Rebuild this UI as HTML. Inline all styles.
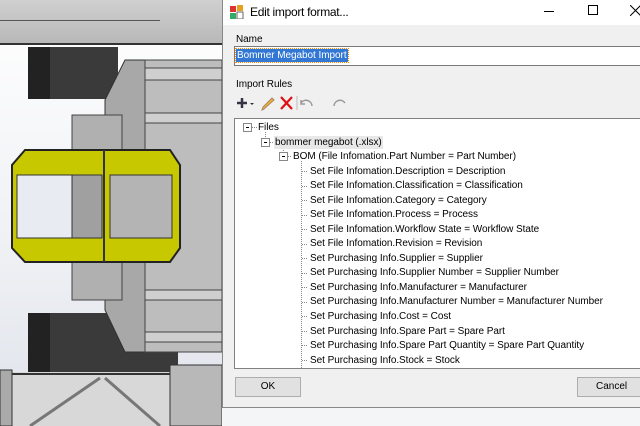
<!DOCTYPE html>
<html><head><meta charset="utf-8"><style>
*{margin:0;padding:0;box-sizing:border-box}
body{width:640px;height:426px;overflow:hidden;position:relative;background:#f4f5f7;font-family:"Liberation Sans",sans-serif;font-size:10px;color:#000}
.a{position:absolute}
.t{position:absolute;white-space:nowrap;font-size:10px;line-height:13px;letter-spacing:-0.05px}
</style></head><body>
<div class="a" style="left:0;top:0;width:222px;height:426px;background:linear-gradient(#fff,#eef0f4 60%,#dfe3ea)"></div>
<div class="a" style="left:0;top:0;width:222px;height:45px;background:linear-gradient(#d0d0d0,#b8b8b8);border-bottom:2px solid #333"></div>
<div class="a" style="left:0;top:20px;width:160px;height:1px;background:#555"></div>
<div class="a" style="left:28px;top:47px;width:90px;height:52px;background:#3a3a3a"></div>
<div class="a" style="left:28px;top:47px;width:22px;height:52px;background:#222"></div>
<div class="a" style="left:28px;top:313px;width:150px;height:60px;background:#3a3a3a"></div>
<div class="a" style="left:28px;top:313px;width:22px;height:60px;background:#222"></div>
<svg class="a" style="left:0;top:0" width="222" height="426">
<polygon points="125,60 222,60 222,352 125,352 105,310 105,100" fill="#a8a8a8" stroke="#333"/>
<rect x="145" y="60" width="77" height="292" fill="#bdbdbd" stroke="#444"/>
<rect x="145" y="68" width="77" height="12" fill="#cfcfcf" stroke="#444"/>
<rect x="145" y="113" width="77" height="10" fill="#cfcfcf" stroke="#444"/>
<rect x="145" y="290" width="77" height="10" fill="#cfcfcf" stroke="#444"/>
<rect x="145" y="332" width="77" height="10" fill="#cfcfcf" stroke="#444"/>
<rect x="72" y="115" width="50" height="185" fill="#b0b0b0" stroke="#444"/>
<polygon points="25,150 170,150 180,165 180,248 170,262 25,262 12,248 12,165" fill="#c8c800" stroke="#222" stroke-width="2"/>
<rect x="17" y="175" width="55" height="63" fill="#e8ecf2" stroke="#333"/>
<rect x="72" y="175" width="30" height="63" fill="#a0a0a0" stroke="#333"/>
<rect x="110" y="175" width="62" height="63" fill="#b4b4b4" stroke="#333"/>
<line x1="104" y1="150" x2="104" y2="262" stroke="#333" stroke-width="2"/>
<rect x="0" y="372" width="222" height="54" fill="#d8d8d8"/>
<line x1="0" y1="374" x2="222" y2="374" stroke="#333" stroke-width="2"/>
<line x1="30" y1="426" x2="100" y2="378" stroke="#777" stroke-width="3"/>
<line x1="105" y1="378" x2="160" y2="426" stroke="#777" stroke-width="3"/>
<rect x="0" y="370" width="12" height="56" fill="#aaa" stroke="#333"/>
<rect x="170" y="365" width="52" height="61" fill="#b8b8b8" stroke="#333"/>
</svg>
<div class="a" style="left:222px;top:0;width:418px;height:408px;background:#f0f0f0;border-left:1px solid #888;border-bottom:1px solid #888"></div>
<div class="a" style="left:223px;top:0;width:417px;height:25px;background:#fff"></div>
<svg class="a" style="left:230px;top:5px" width="14" height="14"><rect x="0" y="1" width="6" height="6" fill="#d33"/><rect x="7" y="0" width="6" height="6" fill="#e8a020"/><rect x="0" y="8" width="6" height="6" fill="#3a6"/><rect x="7" y="7" width="6" height="7" fill="#fff" stroke="#666"/></svg>
<div class="t" style="left:250px;top:5px;font-size:12px;line-height:15px;letter-spacing:-0.3px">Edit import format...</div>
<div class="a" style="left:544px;top:11px;width:10px;height:1px;background:#000"></div>
<div class="a" style="left:588px;top:5px;width:10px;height:10px;border:1px solid #000"></div>
<svg class="a" style="left:630px;top:5px" width="10" height="11"><path d="M0 0L11 11M11 0L0 11" stroke="#000"/></svg>
<div class="t" style="left:236px;top:33px">Name</div>
<div class="a" style="left:234px;top:46px;width:406px;height:20px;background:#fff;border:1px solid #7a7a7a;border-right:none"></div>
<div class="t" style="left:236px;top:49px;background:#3377d4;color:#fff;padding:0 1px;outline:1px dotted #f80">Bommer Megabot Import</div>
<div class="t" style="left:236px;top:78px">Import Rules</div>
<svg class="a" style="left:236px;top:95px" width="120" height="16">
<path d="M1 8H11M6 3V13" stroke="#334" stroke-width="2.5"/><path d="M14 8L18 8L16 10Z" fill="#333"/>
<path d="M28 14L26 15L27 12L36 3L38 5Z" fill="#f0b030" stroke="#a86"/>
<path d="M45 2L56 14M56 2L45 14" stroke="#e01010" stroke-width="2.2"/>
<line x1="61" y1="1" x2="61" y2="15" stroke="#bbb"/>
<path d="M76 11A6 6 0 0 0 65 8M65 5V9H69" stroke="#999" fill="none" stroke-width="1.5"/>
<path d="M98 11A6 6 0 0 1 109 8" stroke="#999" fill="none" stroke-width="1.5"/>
</svg>
<div class="a" style="left:234px;top:118px;width:406px;height:251px;background:#fff;border:1px solid #828282;border-right:none"></div>
<svg class="a" style="left:234px;top:118px" width="120" height="251" stroke="#888" fill="none">
<rect x="9.5" y="5.5" width="8" height="8" fill="#fff"/><path d="M12 9.5h3" stroke="#000"/><path d="M18 9.5h5" stroke-dasharray="1 1"/>
<rect x="27.5" y="20.5" width="8" height="8" fill="#fff"/><path d="M30 24.5h3" stroke="#000"/><path d="M36 24.5h4" stroke-dasharray="1 1"/>
<rect x="45.5" y="34.5" width="8" height="8" fill="#fff"/><path d="M48 38.5h3" stroke="#000"/><path d="M54 38.5h4" stroke-dasharray="1 1"/>
<path d="M31.5 14v6M49.5 28v6M67.5 43v208" stroke-dasharray="1 1"/>
<g stroke-dasharray="1 1">
<path d="M68 53.5h6M68 68.5h6M68 82.5h6M68 97.5h6M68 111.5h6M68 126.5h6M68 140.5h6M68 155.5h6M68 169.5h6M68 184.5h6M68 198.5h6M68 213.5h6M68 227.5h6M68 242.5h6"/></g>
</svg>
<div class="t" style="left:258px;top:121px">Files</div>
<div class="t" style="left:274px;top:136px;background:#e8e8e8;padding:0 1px">bommer megabot (.xlsx)</div>
<div class="t" style="left:293px;top:150px">BOM (File Infomation.Part Number = Part Number)</div>
<div class="t" style="left:310px;top:165px">Set File Infomation.Description = Description</div>
<div class="t" style="left:310px;top:179px">Set File Infomation.Classification = Classification</div>
<div class="t" style="left:310px;top:194px">Set File Infomation.Category = Category</div>
<div class="t" style="left:310px;top:208px">Set File Infomation.Process = Process</div>
<div class="t" style="left:310px;top:223px">Set File Infomation.Workflow State = Workflow State</div>
<div class="t" style="left:310px;top:237px">Set File Infomation.Revision = Revision</div>
<div class="t" style="left:310px;top:252px">Set Purchasing Info.Supplier = Supplier</div>
<div class="t" style="left:310px;top:266px">Set Purchasing Info.Supplier Number = Supplier Number</div>
<div class="t" style="left:310px;top:281px">Set Purchasing Info.Manufacturer = Manufacturer</div>
<div class="t" style="left:310px;top:295px">Set Purchasing Info.Manufacturer Number = Manufacturer Number</div>
<div class="t" style="left:310px;top:310px">Set Purchasing Info.Cost = Cost</div>
<div class="t" style="left:310px;top:325px">Set Purchasing Info.Spare Part = Spare Part</div>
<div class="t" style="left:310px;top:339px">Set Purchasing Info.Spare Part Quantity = Spare Part Quantity</div>
<div class="t" style="left:310px;top:354px">Set Purchasing Info.Stock = Stock</div>
<div class="a" style="left:235px;top:377px;width:66px;height:20px;background:#e1e1e1;border:1px solid #adadad;text-align:center;line-height:18px">OK</div>
<div class="a" style="left:577px;top:377px;width:70px;height:20px;background:#e1e1e1;border:1px solid #adadad;padding-left:18px;line-height:18px">Cancel</div>
</body></html>
